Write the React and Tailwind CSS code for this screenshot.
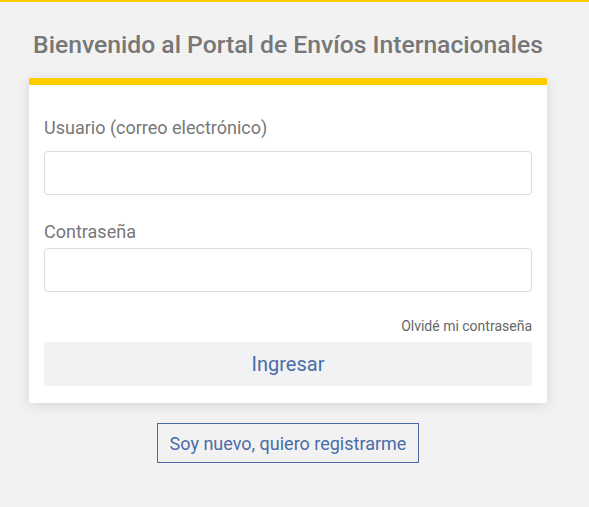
export default function App() {
  return (
    <div className="min-h-[507px] bg-[#f2f2f2] border-t-2 border-[#ffcc00] pr-[13px] flex flex-col items-center" style={{ fontFamily: "Roboto, 'Open Sans', sans-serif" }}>
      <h1 className="mt-[27px] text-[24.7px] leading-[32px] font-medium text-[#777777] text-center whitespace-nowrap">
        Bienvenido al Portal de Envíos Internacionales
      </h1>
      <div className="mt-[17px] w-[518px] bg-white border-t-[7px] border-[#ffcc00] shadow-[0_2px_12px_rgba(0,0,0,0.12)] px-[15px] pt-[31px] pb-[17px]">
        <label className="block text-[18px] leading-[24px] text-[#777777]">Usuario (correo electrónico)</label>
        <input type="text" className="mt-[11px] block w-full h-[44px] border border-[#dddddd] rounded-[4px] bg-white outline-none" />
        <label className="block mt-[25px] text-[18px] leading-[24px] text-[#777777]">Contraseña</label>
        <input type="password" className="mt-[4px] block w-full h-[44px] border border-[#dddddd] rounded-[4px] bg-white outline-none" />
        <div className="mt-[25px] text-right text-[14px] leading-[18px] text-[#666666]">Olvidé mi contraseña</div>
        <button className="mt-[7px] block w-full h-[44px] bg-[#f1f2f4] text-[20px] text-[#4a6ca8]">Ingresar</button>
      </div>
      <button className="mt-[20px] w-[262px] h-[40px] border border-[#4a6ca8] bg-transparent text-[18px] text-[#4a6ca8]">
        Soy nuevo, quiero registrarme
      </button>
    </div>
  );
}
